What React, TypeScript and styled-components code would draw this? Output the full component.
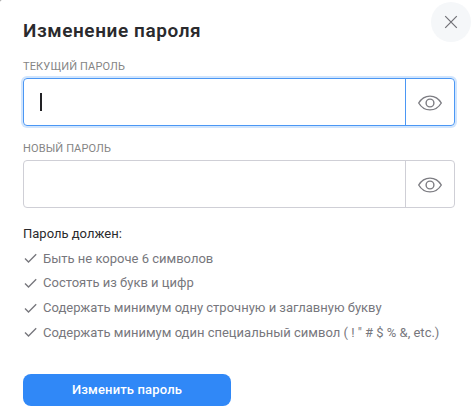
import React from "react";
import styled, { createGlobalStyle } from "styled-components";

const GlobalStyle = createGlobalStyle`
  * { box-sizing: border-box; }
  body { margin: 0; background: #8f8f8f; overflow: hidden; }
`;

const Dialog = styled.main`
  position: relative;
  width: 476px;
  height: 420px;
  padding: 17px 21px 0 23px;
  background: #fff;
  border-top-left-radius: 2px;
  font-family: Roboto, "Liberation Sans", sans-serif;
  color: #2a2a2d;
`;

const CloseButton = styled.button`
  position: absolute;
  top: 2px;
  right: 5px;
  width: 40px;
  height: 40px;
  padding: 0;
  border: 0;
  border-radius: 50%;
  background: #f5f7f9;
  display: grid;
  place-items: center;
`;

const Title = styled.h1`
  margin: 0;
  height: 28px;
  line-height: 28px;
  font-size: 19px;
  font-weight: 600;
  letter-spacing: 0.58px;
  white-space: nowrap;
`;

const Field = styled.section<{ $offset: number }>`
  width: 432px;
  margin-top: ${({ $offset }) => $offset}px;
`;

const Label = styled.label<{ $spacing: number }>`
  display: block;
  height: 16px;
  line-height: 16px;
  font-size: 11px;
  letter-spacing: ${({ $spacing }) => $spacing}px;
  color: #858585;
`;

const InputBox = styled.div<{ $focused?: boolean }>`
  display: flex;
  height: 48px;
  margin-top: 3px;
  border: 1px solid ${({ $focused }) => ($focused ? "#4b97f4" : "#cfcfd6")};
  border-radius: 4px;
  box-shadow: ${({ $focused }) => ($focused ? "0 0 0 2px #d1e5fd" : "none")};
`;

const Entry = styled.div`
  flex: 1;
  display: flex;
  align-items: center;
  padding-left: 16px;
`;

const Caret = styled.span`
  width: 2px;
  height: 18px;
  background: #222225;
`;

const RevealButton = styled.button<{ $focused?: boolean }>`
  width: 49px;
  padding: 1px 0 0;
  border: 0;
  border-left: 1px solid ${({ $focused }) => ($focused ? "#4b97f4" : "#cfcfd6")};
  background: transparent;
  display: grid;
  place-items: center;
`;

const Subtitle = styled.h2`
  margin: 16px 0 0;
  height: 20px;
  line-height: 20px;
  font-size: 13px;
  font-weight: 400;
`;

const Rules = styled.ul`
  margin: 2px 0 0;
  padding: 0;
  list-style: none;
`;

const Rule = styled.li`
  display: flex;
  align-items: center;
  height: 24.67px;
  padding-left: 1px;
  gap: 6px;
  font-size: 13px;
  color: #77777d;
  white-space: nowrap;

  svg { flex: none; }
`;

const Submit = styled.button`
  display: block;
  width: 208px;
  height: 32px;
  margin-top: 29px;
  padding: 0;
  border: 0;
  border-radius: 8px;
  background: #3088f7;
  color: #fff;
  font: 500 13px/32px Roboto, "Liberation Sans", sans-serif;
  letter-spacing: 0.15px;
`;

const Eye = () => (
  <svg width="24" height="16" viewBox="0 0 24 16" fill="none" stroke="#7c7c82" strokeWidth="1.4">
    <path d="M.7 8C3.500 3.300 7.500 1.100 12 1.100S20.500 3.300 23.300 8C20.500 12.700 16.500 14.900 12 14.900S3.500 12.700 .7 8Z" strokeLinejoin="round" />
    <circle cx="12" cy="8" r="3.900" />
  </svg>
);

const Check = () => (
  <svg width="13" height="10" viewBox="0 0 13 10" fill="none" stroke="#77777d" strokeWidth="1.35">
    <path d="M1 5.500 4.500 9 12.200 1.300" />
  </svg>
);

const Password = ({ label, focused, offset, spacing }: {
  label: string; focused?: boolean; offset: number; spacing: number;
}) => (
  <Field $offset={offset}>
    <Label $spacing={spacing}>{label}</Label>
    <InputBox $focused={focused}>
      <Entry>{focused && <Caret />}</Entry>
      <RevealButton $focused={focused} aria-label="Показать пароль"><Eye /></RevealButton>
    </InputBox>
  </Field>
);

const rules = [
  "Быть не короче 6 символов",
  "Состоять из букв и цифр",
  "Содержать минимум одну строчную и заглавную букву",
  'Содержать минимум один специальный символ ( ! " # $ % &, etc.)',
];

export default function App() {
  return (
    <>
      <GlobalStyle />
      <Dialog>
        <CloseButton aria-label="Закрыть">
          <svg width="14" height="14" viewBox="0 0 14 14" stroke="#707076" strokeWidth="1.2">
            <path d="m1.200 1.200 11.600 11.600M12.800 1.200 1.200 12.800" />
          </svg>
        </CloseButton>
        <Title>Изменение пароля</Title>
        <Password label="ТЕКУЩИЙ ПАРОЛЬ" focused offset={14} spacing={0.15} />
        <Password label="НОВЫЙ ПАРОЛЬ" offset={15} spacing={0.13} />
        <Subtitle>Пароль должен:</Subtitle>
        <Rules>
          {rules.map((text) => (
            <Rule key={text}><Check /><span>{text}</span></Rule>
          ))}
        </Rules>
        <Submit>Изменить пароль</Submit>
      </Dialog>
    </>
  );
}
